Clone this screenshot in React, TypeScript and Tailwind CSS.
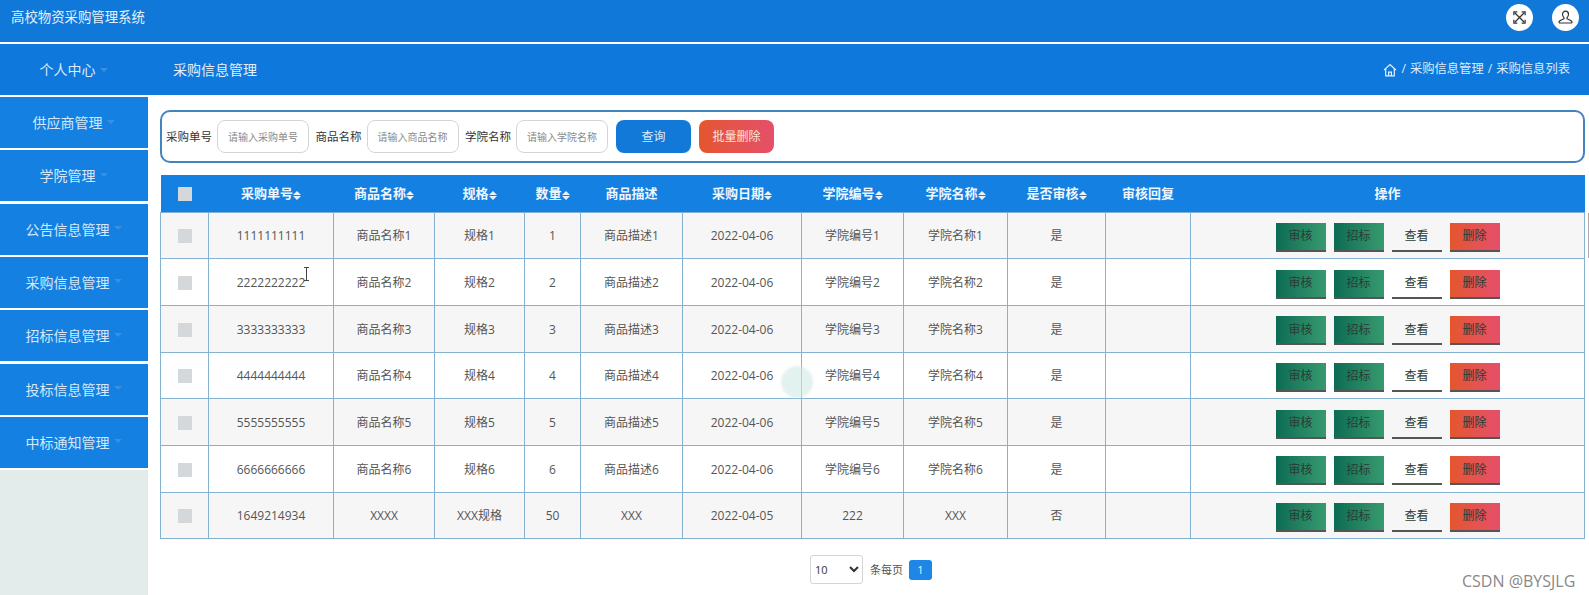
import React from "react";

const FONT = "font-['Open_Sans','Noto_Sans_CJK_SC',sans-serif]";

const menus = ["供应商管理", "学院管理", "公告信息管理", "采购信息管理", "招标信息管理", "投标信息管理", "中标通知管理"];

const cols = [
  { t: "", w: "w-[48px]" },
  { t: "采购单号", w: "w-[125px]", s: true },
  { t: "商品名称", w: "w-[101px]", s: true },
  { t: "规格", w: "w-[90px]", s: true },
  { t: "数量", w: "w-[56px]", s: true },
  { t: "商品描述", w: "w-[102px]" },
  { t: "采购日期", w: "w-[119px]", s: true },
  { t: "学院编号", w: "w-[102px]", s: true },
  { t: "学院名称", w: "w-[104px]", s: true },
  { t: "是否审核", w: "w-[98px]", s: true },
  { t: "审核回复", w: "w-[85px]" },
  { t: "操作", w: "" },
];

const rows = [1, 2, 3, 4, 5, 6].map((i) => [
  String(i).repeat(10),
  `商品名称${i}`,
  `规格${i}`,
  String(i),
  `商品描述${i}`,
  "2022-04-06",
  `学院编号${i}`,
  `学院名称${i}`,
  "是",
]);
rows.push(["1649214934", "XXXX", "XXX规格", "50", "XXX", "2022-04-05", "222", "XXX", "否"]);

function Caret() {
  return <span className="ml-[4px] inline-block h-0 w-0 translate-y-[-1px] border-x-[4px] border-t-[4px] border-x-transparent border-t-[#3a8fe0] align-middle" />;
}

function Sort() {
  return (
    <span className="inline-flex translate-y-[1px] flex-col gap-[1px] align-middle">
      <span className="h-0 w-0 border-x-[4px] border-b-[4px] border-x-transparent border-b-[#e8f2fb]" />
      <span className="h-0 w-0 border-x-[4px] border-t-[4px] border-x-transparent border-t-[#e8f2fb]" />
    </span>
  );
}

function Box() {
  return <span className="inline-block h-[14px] w-[14px] bg-[#d4d8db] align-middle" />;
}

function Field({ label, ph }: { label: string; ph: string }) {
  return (
    <div className="flex items-center">
      <span className="w-[46px] whitespace-nowrap text-[11.5px] text-[#333]">{label}</span>
      <input
        readOnly
        placeholder={ph}
        className="ml-[5px] h-[33px] w-[92px] rounded-[8px] border border-[#d5d5d5] bg-white text-center text-[10px] outline-none placeholder:text-[#8a8a8a]"
      />
    </div>
  );
}

const green = "bg-gradient-to-r from-[#0a6c54] to-[#379a6f]";
const red = "bg-gradient-to-r from-[#e4562b] to-[#e54f69]";

function Action({ t, c }: { t: string; c: string }) {
  return (
    <span className={`flex h-[29px] w-[50px] items-center justify-center border-b-2 border-b-[#555] text-[12px] text-[#2b3b36] ${c}`}>{t}</span>
  );
}

export default function App() {
  return (
    <div className={`relative flex h-[595px] w-[1589px] flex-col overflow-hidden bg-white ${FONT}`}>
      <header className="flex h-[42px] shrink-0 items-center justify-between bg-[#0f78d9] pb-[8px] pl-[11px] pr-[10px]">
        <span className="text-[13.4px] text-[#e6f0fa]">高校物资采购管理系统</span>
        <div className="flex items-center gap-[19px]">
          <span className="flex h-[27px] w-[27px] items-center justify-center rounded-full bg-white">
            <svg width="13" height="13" viewBox="0 0 15 15" fill="none" stroke="#333" strokeWidth="1.5">
              <path d="M2 2l11 11M13 2L2 13" />
              <path d="M1 5V1h4M10 1h4v4M14 10v4h-4M5 14H1v-4" strokeWidth="1.4" />
            </svg>
          </span>
          <span className="flex h-[27px] w-[27px] items-center justify-center rounded-full bg-white">
            <svg width="15" height="15" viewBox="0 0 15 15" fill="none" stroke="#333" strokeWidth="1.2">
              <path d="M7.5 1.2c-1.9 0-3 1.3-3 3.1 0 1.5.7 2.7 1.5 3.4v1.1c-1.6.8-4 1.3-4.8 2.6-.3.6-.2 1.6.4 1.6h11.8c.6 0 .7-1 .4-1.6-.8-1.3-3.2-1.8-4.8-2.6V7.7c.8-.7 1.5-1.9 1.5-3.4 0-1.8-1.1-3.1-3-3.1z" />
            </svg>
          </span>
        </div>
      </header>

      <div className="mt-[2px] flex h-[51px] shrink-0 items-center bg-[#0f78dc] pr-[19px]">
        <div className="w-[147px] text-center text-[14px] text-[#dcebfa]">
          个人中心
          <Caret />
        </div>
        <div className="ml-[26px] text-[14px] text-[#e3eefa]">采购信息管理</div>
        <div className="ml-auto flex items-center gap-[4px] text-[12.3px] text-[#dcebfa]">
          <svg width="14" height="14" viewBox="0 0 13 13" fill="none" stroke="#e6f0fa" strokeWidth="1.1">
            <path d="M1 6.5L6.5 1.5 12 6.5M2.5 5.5V12h8V5.5M5.2 12V8.5h2.6V12" />
          </svg>
          <span>/</span>
          <span>采购信息管理</span>
          <span>/</span>
          <span>采购信息列表</span>
        </div>
      </div>

      <div className="flex min-h-0 flex-1">
        <aside className="flex w-[148px] shrink-0 flex-col">
          <div className="flex flex-col gap-[2.33px] bg-white py-[2px]">
            {menus.map((m) => (
              <div key={m} className="flex h-[51px] items-center justify-center bg-[#1480e2] pr-[1px] text-[14px] text-[#d5e8f9]">
                <span>{m}</span>
                <Caret />
              </div>
            ))}
          </div>
          <div className="flex-1 bg-[#e3ecea]" />
        </aside>

        <main className="flex min-w-0 flex-1 flex-col pl-[12px] pr-[4px] pt-[15px]">
          <div className="flex h-[53px] shrink-0 items-center gap-[8px] rounded-[10px] border-2 border-[#4383c0] pl-[4px]">
            <div className="flex items-center gap-[6.5px]">
              <Field label="采购单号" ph="请输入采购单号" />
              <Field label="商品名称" ph="请输入商品名称" />
              <Field label="学院名称" ph="请输入学院名称" />
            </div>
            <span className="flex h-[33px] w-[75px] items-center justify-center rounded-[8px] bg-[#1279d9] text-[12px] text-[#dcebfa]">查询</span>
            <span className={`flex h-[33px] w-[75px] items-center justify-center rounded-[8px] text-[12px] text-[#fbe3dc] ${red}`}>批量删除</span>
          </div>

          <table className="mt-[12px] w-[1425px] table-fixed border-collapse">
            <colgroup>
              {cols.map((c, i) => (
                <col key={i} className={c.w} />
              ))}
            </colgroup>
            <thead>
              <tr className="h-[37px] bg-[#1480e2] text-[13px] font-bold text-[#eef6fd]">
                {cols.map((c, i) => (
                  <th key={i} className="whitespace-nowrap p-0 text-center font-bold">
                    {i === 0 ? <Box /> : c.t}
                    {c.s && <Sort />}
                  </th>
                ))}
              </tr>
            </thead>
            <tbody>
              {rows.map((r, ri) => (
                <tr key={ri} className={`h-[46.7px] text-[12px] text-[#555] ${ri % 2 === 0 ? "bg-[#f6f6f6]" : "bg-white"}`}>
                  <td className="border border-[#84b2d3] p-0 text-center">
                    <Box />
                  </td>
                  {r.map((v, i) => (
                    <td key={i} className="whitespace-nowrap border border-[#84b2d3] p-0 pt-[2px] text-center">
                      {v}
                    </td>
                  ))}
                  <td className="border border-[#84b2d3] p-0" />
                  <td className="border border-[#84b2d3] p-0 pt-[4px]">
                    <div className="flex items-center justify-center gap-[8px]">
                      <Action t="审核" c={green} />
                      <Action t="招标" c={green} />
                      <Action t="查看" c="bg-transparent" />
                      <Action t="删除" c={red} />
                    </div>
                  </td>
                </tr>
              ))}
            </tbody>
          </table>

          <div className="mt-[16px] flex items-center pl-[650px] text-[11px] text-[#555]">
            <select defaultValue="10" className="h-[29px] w-[53px] rounded-[3px] border border-[#d5d5d5] bg-white text-[11px] text-[#333]">
              <option>10</option>
            </select>
            <span className="ml-[7px]">条每页</span>
            <span className="ml-[6px] flex h-[20px] w-[23px] items-center justify-center rounded-[3px] bg-[#1d87e8] text-[#e6f2fd]">1</span>
          </div>
        </main>
      </div>

      {/* video artefacts lying over the page */}
      <span className="absolute left-[781px] top-[366px] h-[32px] w-[32px] rounded-full bg-[#cfe9e2]/60 blur-[1px]" />
      <svg className="absolute left-[303px] top-[267px]" width="7" height="14" viewBox="0 0 7 14" fill="none" stroke="#444" strokeWidth="1">
        <path d="M1 .5h5M3.5.5v13M1 13.5h5" />
      </svg>
      <span className="absolute left-[1588px] top-[213px] h-[45px] w-[1px] bg-[#aaaaaa]" />
      <span className="absolute left-[1462px] top-[570px] text-[16px] leading-[22px] text-[#888]">CSDN @BYSJLG</span>
    </div>
  );
}
